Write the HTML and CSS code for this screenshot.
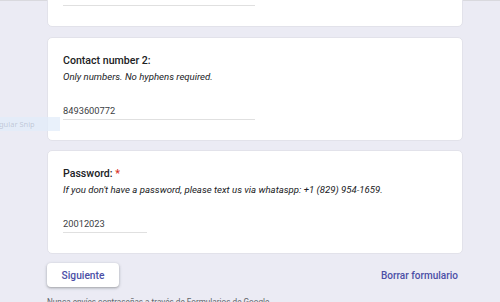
FILE: index.html
```html
<!DOCTYPE html>
<html lang="es">
<head>
<meta charset="utf-8">
<link rel="stylesheet" href="styles.css">
</head>
<body>
<div class="topline"></div>
<main class="form">
  <section class="card card-first">
    <div class="answer"><span class="value">&nbsp;</span></div>
  </section>
  <section class="card">
    <div class="title">Contact number 2:</div>
    <div class="desc">Only numbers. No hyphens required.</div>
    <div class="answer"><span class="value">8493600772</span></div>
  </section>
  <section class="card">
    <div class="title">Password: <span class="req">*</span></div>
    <div class="desc">If you don't have a password, please text us via whataspp: +1 (829) 954-1659.</div>
    <div class="answer short"><span class="value">20012023</span></div>
  </section>
  <div class="actions">
    <button class="btn-next">Siguiente</button>
    <button class="btn-clear">Borrar formulario</button>
  </div>
  <p class="footer">Nunca envíes contraseñas a través de Formularios de Google.</p>
</main>
<div class="snip">gular Snip</div>
</body>
</html>
```
FILE: styles.css
```css
html, body {
  margin: 0;
  padding: 0;
}
body {
  background: #ebebf4;
  font-family: Roboto, "Noto Sans", Arial, sans-serif;
  color: #202124;
  position: relative;
  height: 302px;
  overflow: hidden;
}
.topline {
  height: 1px;
  background: #d9d9de;
}
.form {
  width: 416px;
  margin-left: 47px;
  display: flex;
  flex-direction: column;
}
.card {
  background: #fff;
  border: 1px solid #e2e2ea;
  border-radius: 5px;
  padding: 15px 15px 20px;
  margin-bottom: 9px;
}
.card-first {
  margin-top: -33px;
  padding-top: 20px;
  margin-bottom: 10px;
}
.title {
  font-size: 10.6px;
  font-weight: 500;
  line-height: 15px;
  color: #202124;
}
.req {
  color: #d93025;
}
.desc {
  font-size: 9.6px;
  font-style: italic;
  line-height: 15px;
  color: #202124;
  margin-top: 1px;
}
.answer {
  width: 192px;
  border-bottom: 1px solid #e0e0e0;
  margin-top: 19px;
}
.card-first .answer {
  margin-top: 0;
}
.answer.short {
  width: 84px;
}
.value {
  display: block;
  font-size: 9.3px;
  line-height: 16px;
  height: 16px;
  color: #3c4043;
}
.actions {
  display: flex;
  justify-content: space-between;
  align-items: center;
}
.btn-next {
  width: 72px;
  height: 24px;
  background: #fff;
  border: none;
  border-radius: 4px;
  box-shadow: 0 1px 2px rgba(60,64,67,.3), 0 1px 3px 1px rgba(60,64,67,.12);
  font-family: Roboto, sans-serif;
  font-size: 10.2px;
  font-weight: 500;
  color: #4b4fa6;
  padding: 0;
}
.btn-clear {
  background: none;
  border: none;
  font-family: Roboto, sans-serif;
  font-size: 10px;
  font-weight: 500;
  color: #4b4fa6;
  padding: 0 5px;
}
.footer {
  margin: 9px 0 0;
  font-size: 8.2px;
  line-height: 12px;
  color: #5f6368;
}
.snip {
  position: absolute;
  left: 0;
  top: 117px;
  width: 60px;
  height: 14px;
  background: rgba(225, 236, 250, 0.75);
  font-family: "Segoe UI", "Noto Sans", sans-serif;
  font-size: 7.5px;
  line-height: 14px;
  color: rgba(120,130,150,0.35);
  text-indent: -1px;
  overflow: hidden;
  white-space: nowrap;
}
```
